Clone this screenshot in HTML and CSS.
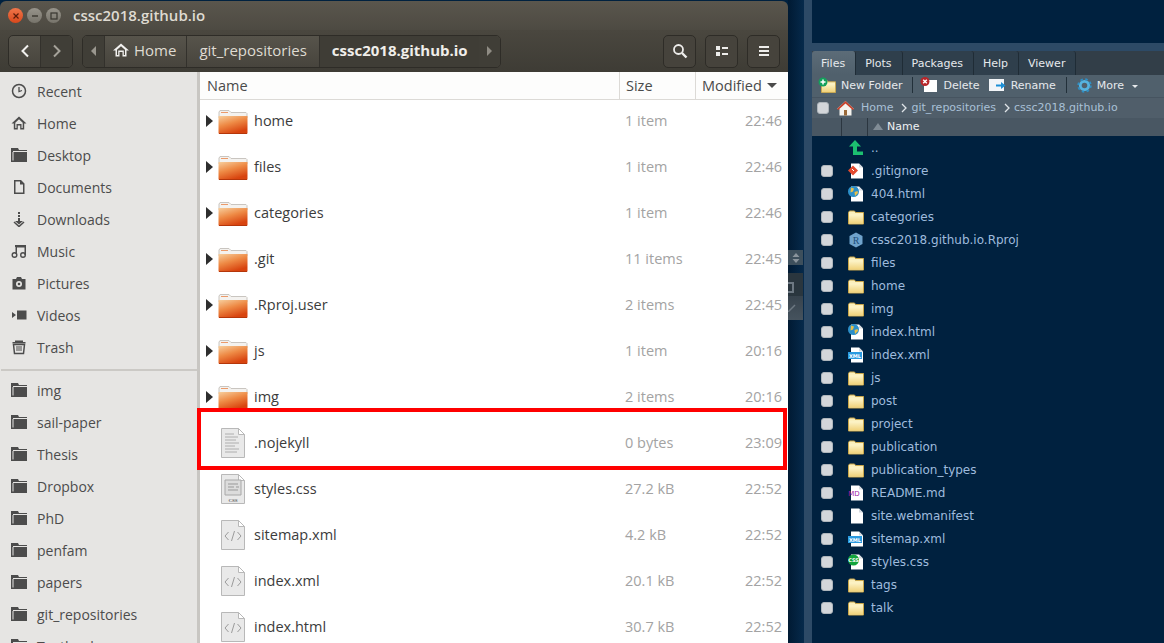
FILE: index.html
```html
<!DOCTYPE html>
<html lang="en">
<head>
  <meta charset="UTF-8" />
  <meta name="viewport" content="width=device-width, initial-scale=1" />
  <title>cssc2018.github.io</title>
  <link rel="stylesheet" href="styles.css">
</head>
<body>

<svg class="defs" width="0" height="0">
  <defs>
    <linearGradient id="orange" x1="0" y1="0" x2="0.5" y2="1">
      <stop offset="0" stop-color="#f7cf9e"/>
      <stop offset="0.5" stop-color="#ee8a45"/>
      <stop offset="1" stop-color="#d8440f"/>
    </linearGradient>
    <linearGradient id="yellow" x1="0" y1="0" x2="0" y2="1">
      <stop offset="0" stop-color="#fdf5cb"/>
      <stop offset="1" stop-color="#f0d27a"/>
    </linearGradient>
    <symbol id="side-folder" viewBox="0 0 16 16">
      <path d="M0 1h7l1 2h8v12H0z M1.500 5v8.500h1V5z" fill="#4c4c4c" fill-rule="evenodd"/>
      <path d="M2 4.500h14" stroke="#e6e5e3"/>
    </symbol>
    <symbol id="orange-folder" viewBox="0 0 30 24">
      <path d="M1 2l1-1.500h9l2 2h15l1 1V8H1z" fill="#f4f2ef" stroke="#c9c5c0"/>
      <path d="M3 2.500h7" stroke="#eb9a6a"/>
      <path d="M.5 6h29v17.500h-29z" fill="url(#orange)"/>
      <path d="M1 23.500h28" stroke="#b5360a"/>
    </symbol>
    <symbol id="text-file" viewBox="0 0 24 30">
      <path d="M.5.5h17l6 6v23H.5z" fill="#e9e9e9" stroke="#b8b8b8"/>
      <path d="M17.500.5v6h6z" fill="#fff" stroke="#b8b8b8"/>
    </symbol>
    <symbol id="code-file" viewBox="0 0 24 30">
      <use href="#text-file" width="24" height="30"/>
      <path d="M7.500 12L4 16l3.500 4M16.500 12l3.500 4-3.500 4M13.500 11l-3 10" fill="none" stroke="#9b9b9b"/>
    </symbol>
    <symbol id="yellow-folder" viewBox="0 0 16 15">
      <path d="M.5 3l1-1.500h5l1 1.500h8v11.500H.5z" fill="#fbf0bd" stroke="#c9a64a"/>
      <path d="M1 5h14v9H1z" fill="url(#yellow)"/>
    </symbol>
    <symbol id="page" viewBox="0 0 16 16">
      <path d="M3 .5h8l4 4v11H3z" fill="#fff"/>
      <path d="M11 .5v4h4z" fill="#d5dbe1"/>
    </symbol>
  </defs>
</svg>

<div class="desktop">

  <section class="nautilus">
    <header class="titlebar">
      <div class="win-btn close">
        <svg width="8" height="8" viewBox="0 0 8 8"><path d="M1.500 1.500l5 5M6.500 1.500l-5 5" stroke="#5a1c0a" stroke-width="1.200"/></svg>
      </div>
      <div class="win-btn">
        <svg width="8" height="8" viewBox="0 0 8 8"><path d="M1 4h6" stroke="#38362f" stroke-width="1.400"/></svg>
      </div>
      <div class="win-btn">
        <svg width="8" height="8" viewBox="0 0 8 8"><rect x="1" y="1" width="6" height="6" fill="none" stroke="#38362f" stroke-width="1.200"/></svg>
      </div>
      <span class="win-title">cssc2018.github.io</span>
    </header>

    <div class="toolbar">
      <div class="btn-group nav-group">
        <div class="nav-btn">
          <svg width="10" height="14" viewBox="0 0 10 14"><path d="M8 1.500L2.500 7 8 12.500" fill="none" stroke="#f2f1ef" stroke-width="2"/></svg>
        </div>
        <div class="nav-btn disabled">
          <svg width="10" height="14" viewBox="0 0 10 14"><path d="M2 1.500L7.500 7 2 12.500" fill="none" stroke="#a5a29a" stroke-width="2"/></svg>
        </div>
      </div>
      <div class="btn-group crumbs">
        <div class="crumb-arrow"><svg width="6" height="10" viewBox="0 0 6 10"><path d="M5 0v10L0 5z" fill="#9a978f"/></svg></div>
        <div class="crumb crumb-home">
          <svg width="16" height="14" viewBox="0 0 16 14"><path d="M8 .5L0 7.500h2.500v6h4V9h3v4.500h4v-6H16z M4 6.800L8 3.200l4 3.600V12h-1.200V7.500H5.200V12H4z" fill="#f2f1ef" fill-rule="evenodd"/></svg>
          Home
        </div>
        <div class="crumb">git_repositories</div>
        <div class="crumb current">cssc2018.github.io</div>
        <div class="crumb-arrow"><svg width="6" height="10" viewBox="0 0 6 10"><path d="M1 0v10l5-5z" fill="#8f8c84"/></svg></div>
      </div>
      <div class="tool-spacer"></div>
      <div class="tool-btn">
        <svg width="16" height="16" viewBox="0 0 16 16"><circle cx="6.500" cy="6.500" r="4.500" fill="none" stroke="#eeedeb" stroke-width="1.800"/><path d="M10 10l4.500 4.500" stroke="#eeedeb" stroke-width="2.400"/></svg>
      </div>
      <div class="tool-btn">
        <svg width="14" height="12" viewBox="0 0 14 12"><path d="M1 1h4v4H1zM1 7h4v4H1zM7 2h6v2H7zM7 8h6v2H7z" fill="#eeedeb"/></svg>
      </div>
      <div class="tool-btn">
        <svg width="12" height="12" viewBox="0 0 12 12"><path d="M1 1h10v2H1zM1 5h10v2H1zM1 9h10v2H1z" fill="#eeedeb"/></svg>
      </div>
    </div>

    <div class="nautilus-body">
      <aside class="places">
        <ul class="place-list">
          <li><svg class="place-icon" viewBox="0 0 16 16"><circle cx="8" cy="8" r="6.500" fill="none" stroke="#4c4c4c" stroke-width="1.500"/><path d="M8 4v4.500l3-1" fill="none" stroke="#4c4c4c" stroke-width="1.300"/></svg>Recent</li>
          <li><svg class="place-icon" viewBox="0 0 16 16"><path d="M8 1.500L.5 8.500h2.300v6h4v-4h2.400v4h4v-6h2.300zM4.300 7.700L8 4.200l3.700 3.500v5.300h-1.200V9H5.500v4H4.300z" fill="#4c4c4c" fill-rule="evenodd"/></svg>Home</li>
          <li><svg class="place-icon"><use href="#side-folder"/></svg>Desktop</li>
          <li><svg class="place-icon" viewBox="0 0 16 16"><path d="M3 1h7l3.500 3.500V15H3z M4.500 2.500v11h7.500V5.500H9v-3z" fill="#4c4c4c" fill-rule="evenodd"/></svg>Documents</li>
          <li><svg class="place-icon" viewBox="0 0 16 16"><path d="M7 1h2v2H7zM7 4h2v2H7zM7 7h2v3h3L8 13.500 4 10h3z" fill="#4c4c4c"/><path d="M3 11l5 4.500 5-4.500" fill="none" stroke="#4c4c4c" stroke-width="1.500"/></svg>Downloads</li>
          <li><svg class="place-icon" viewBox="0 0 16 16"><path d="M4 2h11v2.500H6V11H4.500V4H4zM13.500 4H15v8h-1.500z" fill="#4c4c4c"/><circle cx="3.500" cy="12" r="2.300" fill="none" stroke="#4c4c4c" stroke-width="1.400"/><circle cx="12" cy="12" r="2.300" fill="none" stroke="#4c4c4c" stroke-width="1.400"/></svg>Music</li>
          <li><svg class="place-icon" viewBox="0 0 16 16"><path d="M1.500 4H5l1-2h4l1 2h3.500v10.500h-13z" fill="#4c4c4c"/><circle cx="8" cy="9" r="3" fill="#e6e5e3"/><circle cx="8" cy="9" r="1.300" fill="#4c4c4c"/></svg>Pictures</li>
          <li><svg class="place-icon" viewBox="0 0 16 16"><path d="M6 3.500h9.500v9H6zM1 5l4 3-4 3z" fill="#4c4c4c"/></svg>Videos</li>
          <li><svg class="place-icon" viewBox="0 0 16 16"><path d="M4 1.500h8v2H4z M1.500 3h13v1.500h-13z" fill="#4c4c4c"/><path d="M2.500 5.500h11l-1 9h-9z" fill="none" stroke="#4c4c4c" stroke-width="1.500"/><path d="M6 7v5M8 7v5M10 7v5" stroke="#4c4c4c"/></svg>Trash</li>
        </ul>
        <ul class="place-list bookmarks">
          <li><svg class="place-icon"><use href="#side-folder"/></svg>img</li>
          <li><svg class="place-icon"><use href="#side-folder"/></svg>sail-paper</li>
          <li><svg class="place-icon"><use href="#side-folder"/></svg>Thesis</li>
          <li><svg class="place-icon"><use href="#side-folder"/></svg>Dropbox</li>
          <li><svg class="place-icon"><use href="#side-folder"/></svg>PhD</li>
          <li><svg class="place-icon"><use href="#side-folder"/></svg>penfam</li>
          <li><svg class="place-icon"><use href="#side-folder"/></svg>papers</li>
          <li><svg class="place-icon"><use href="#side-folder"/></svg>git_repositories</li>
          <li><svg class="place-icon"><use href="#side-folder"/></svg>Textbook</li>
        </ul>
      </aside>

      <main class="file-view">
        <div class="col-head">
          <div class="col col-name">Name</div>
          <div class="col col-size">Size</div>
          <div class="col col-date">Modified <span class="sort-caret"></span></div>
        </div>

        <div class="file-row">
          <span class="expander"></span><svg class="folder-icon"><use href="#orange-folder"/></svg>
          <span class="file-name">home</span><span class="file-size">1 item</span><span class="file-date">22:46</span>
        </div>
        <div class="file-row">
          <span class="expander"></span><svg class="folder-icon"><use href="#orange-folder"/></svg>
          <span class="file-name">files</span><span class="file-size">1 item</span><span class="file-date">22:46</span>
        </div>
        <div class="file-row">
          <span class="expander"></span><svg class="folder-icon"><use href="#orange-folder"/></svg>
          <span class="file-name">categories</span><span class="file-size">1 item</span><span class="file-date">22:46</span>
        </div>
        <div class="file-row">
          <span class="expander"></span><svg class="folder-icon"><use href="#orange-folder"/></svg>
          <span class="file-name">.git</span><span class="file-size">11 items</span><span class="file-date">22:45</span>
        </div>
        <div class="file-row">
          <span class="expander"></span><svg class="folder-icon"><use href="#orange-folder"/></svg>
          <span class="file-name">.Rproj.user</span><span class="file-size">2 items</span><span class="file-date">22:45</span>
        </div>
        <div class="file-row">
          <span class="expander"></span><svg class="folder-icon"><use href="#orange-folder"/></svg>
          <span class="file-name">js</span><span class="file-size">1 item</span><span class="file-date">20:16</span>
        </div>
        <div class="file-row">
          <span class="expander"></span><svg class="folder-icon"><use href="#orange-folder"/></svg>
          <span class="file-name">img</span><span class="file-size">2 items</span><span class="file-date">20:16</span>
        </div>
        <div class="file-row">
          <span class="expander none"></span>
          <svg class="doc-icon" viewBox="0 0 24 30">
            <use href="#text-file" width="24" height="30"/>
            <path d="M4 6h9M4 9h13M4 12h11M4 15h14M4 18h10M4 21h14M4 24h12" stroke="#aeaeae"/>
          </svg>
          <span class="file-name">.nojekyll</span><span class="file-size">0 bytes</span><span class="file-date">23:09</span>
        </div>
        <div class="file-row">
          <span class="expander none"></span>
          <svg class="doc-icon" viewBox="0 0 24 30">
            <use href="#text-file" width="24" height="30"/>
            <path d="M4 6h16v15H4z" fill="#dcdcdc" stroke="#a8a8a8"/>
            <path d="M7 10h10M7 13h6M15 13h3M7 16h10" stroke="#999"/>
            <text x="12" y="27.500" class="css-tag">CSS</text>
          </svg>
          <span class="file-name">styles.css</span><span class="file-size">27.2 kB</span><span class="file-date">22:52</span>
        </div>
        <div class="file-row">
          <span class="expander none"></span>
          <svg class="doc-icon"><use href="#code-file"/></svg>
          <span class="file-name">sitemap.xml</span><span class="file-size">4.2 kB</span><span class="file-date">22:52</span>
        </div>
        <div class="file-row">
          <span class="expander none"></span>
          <svg class="doc-icon"><use href="#code-file"/></svg>
          <span class="file-name">index.xml</span><span class="file-size">20.1 kB</span><span class="file-date">22:52</span>
        </div>
        <div class="file-row">
          <span class="expander none"></span>
          <svg class="doc-icon"><use href="#code-file"/></svg>
          <span class="file-name">index.html</span><span class="file-size">30.7 kB</span><span class="file-date">22:52</span>
        </div>
      </main>
    </div>

    <div class="highlight-box"></div>
  </section>

  <div class="splitter">
    <div class="split-widget">
      <svg width="8" height="12" viewBox="0 0 8 12"><path d="M4 1l3.500 4h-7zM4 11L.5 7h7z" fill="#8a949c"/></svg>
    </div>
    <div class="split-panel">
      <span class="split-top"><span class="split-square"></span></span>
      <span class="split-bottom">
        <svg width="8" height="8" viewBox="0 0 8 8"><path d="M0 8L7 1" stroke="#6d7882" stroke-width="1.500"/></svg>
      </span>
    </div>
  </div>

  <section class="rstudio">
    <div class="r-tabs">
      <div class="r-tab active">Files</div>
      <div class="r-tab">Plots</div>
      <div class="r-tab">Packages</div>
      <div class="r-tab">Help</div>
      <div class="r-tab">Viewer</div>
    </div>

    <div class="r-toolbar">
      <span class="r-action">
        <svg width="18" height="16" viewBox="0 0 18 16"><use href="#yellow-folder" x="3" y="2" width="15" height="14"/><circle cx="5" cy="5" r="4.500" fill="#14a05c"/><path d="M5 2.500v5M2.500 5h5" stroke="#fff" stroke-width="1.500"/></svg>
        New Folder
      </span>
      <span class="r-sep"></span>
      <span class="r-action">
        <svg width="18" height="16" viewBox="0 0 18 16"><path d="M4 3h13v12H4z" fill="#fff"/><circle cx="5" cy="4.500" r="4.500" fill="#b8262a"/><path d="M3.200 2.700l3.600 3.600M6.800 2.700L3.200 6.300" stroke="#fff" stroke-width="1.400"/></svg>
        Delete
      </span>
      <span class="r-action rename">
        <svg width="17" height="14" viewBox="0 0 17 14"><path d="M0 1h15v12H0z" fill="#f2f5f8"/><path d="M7 6.500h5V4l4.500 3.500L12 11V8.500H7z" fill="#1c8fd6"/></svg>
        Rename
      </span>
      <span class="r-sep wide"></span>
      <span class="r-action">
        <svg width="15" height="15" viewBox="0 0 15 15"><circle cx="7.500" cy="7.500" r="4.200" fill="none" stroke="#56b4e0" stroke-width="2.800"/><circle cx="7.500" cy="7.500" r="6.300" fill="none" stroke="#2f8fc4" stroke-width="1.800" stroke-dasharray="2.500 2.450"/></svg>
        More
        <span class="r-caret"></span>
      </span>
    </div>

    <div class="r-path">
      <span class="r-check"></span>
      <svg class="r-home" width="17" height="16" viewBox="0 0 17 16"><path d="M8.500 1L0 9h2.500v6.500h12V9H17z" fill="#f5f3ee"/><path d="M8.500 1L0 9l1.200 1L8.500 3.500 15.800 10 17 9z" fill="#c8402a"/><path d="M7 10h3v5.500H7z" fill="#9a6a3a"/></svg>
      <span class="r-link">Home</span>
      <svg class="r-gt" width="6" height="10" viewBox="0 0 6 10"><path d="M1 1l4 4-4 4" fill="none" stroke="#dfe4e8" stroke-width="1.300"/></svg>
      <span class="r-link">git_repositories</span>
      <svg class="r-gt" width="6" height="10" viewBox="0 0 6 10"><path d="M1 1l4 4-4 4" fill="none" stroke="#dfe4e8" stroke-width="1.300"/></svg>
      <span class="r-link">cssc2018.github.io</span>
    </div>

    <div class="r-head">
      <span class="r-head-a"></span>
      <span class="r-head-b"></span>
      <span class="r-head-name"><span class="r-sort"></span>Name</span>
    </div>

    <div class="r-row">
      <span class="r-check hidden"></span>
      <svg class="r-icon" viewBox="0 0 16 16"><path d="M7 0L1 6.500h4V15h10v-3.500H9V6.500h4z" fill="#1cc070"/></svg>
      <span class="r-name">..</span>
    </div>
    <div class="r-row">
      <span class="r-check"></span>
      <svg class="r-icon" viewBox="0 0 16 16"><use href="#page" width="16" height="16"/><path d="M5 2.500L10 7.500 5 12.500 0 7.500z" fill="#e2492f"/><path d="M4 6l2 2" stroke="#fff"/></svg>
      <span class="r-name">.gitignore</span>
    </div>
    <div class="r-row">
      <span class="r-check"></span>
      <svg class="r-icon" viewBox="0 0 16 16"><use href="#page" width="16" height="16"/><circle cx="5.500" cy="5.500" r="5.500" fill="#2b8fc9"/><path d="M3 1.500l3 1-1 3-2.500 1zM6.500 6l3-1 .5 2-3 3z" fill="#e8c04a"/></svg>
      <span class="r-name">404.html</span>
    </div>
    <div class="r-row">
      <span class="r-check"></span>
      <svg class="r-icon"><use href="#yellow-folder"/></svg>
      <span class="r-name">categories</span>
    </div>
    <div class="r-row">
      <span class="r-check"></span>
      <svg class="r-icon" viewBox="0 0 16 16"><path d="M8 .5l6.500 3.500v8L8 15.500 1.500 12V4z" fill="#6fa3cc"/><text x="8" y="11.500" class="tag-r">R</text></svg>
      <span class="r-name">cssc2018.github.io.Rproj</span>
    </div>
    <div class="r-row">
      <span class="r-check"></span>
      <svg class="r-icon"><use href="#yellow-folder"/></svg>
      <span class="r-name">files</span>
    </div>
    <div class="r-row">
      <span class="r-check"></span>
      <svg class="r-icon"><use href="#yellow-folder"/></svg>
      <span class="r-name">home</span>
    </div>
    <div class="r-row">
      <span class="r-check"></span>
      <svg class="r-icon"><use href="#yellow-folder"/></svg>
      <span class="r-name">img</span>
    </div>
    <div class="r-row">
      <span class="r-check"></span>
      <svg class="r-icon" viewBox="0 0 16 16"><use href="#page" width="16" height="16"/><circle cx="5.500" cy="5.500" r="5.500" fill="#2b8fc9"/><path d="M3 1.500l3 1-1 3-2.500 1zM6.500 6l3-1 .5 2-3 3z" fill="#e8c04a"/></svg>
      <span class="r-name">index.html</span>
    </div>
    <div class="r-row">
      <span class="r-check"></span>
      <svg class="r-icon" viewBox="0 0 16 16"><use href="#page" width="16" height="16"/><rect x="0" y="5" width="14" height="7" fill="#2a9ae0"/><text x="7" y="11" class="tag-small">XML</text></svg>
      <span class="r-name">index.xml</span>
    </div>
    <div class="r-row">
      <span class="r-check"></span>
      <svg class="r-icon"><use href="#yellow-folder"/></svg>
      <span class="r-name">js</span>
    </div>
    <div class="r-row">
      <span class="r-check"></span>
      <svg class="r-icon"><use href="#yellow-folder"/></svg>
      <span class="r-name">post</span>
    </div>
    <div class="r-row">
      <span class="r-check"></span>
      <svg class="r-icon"><use href="#yellow-folder"/></svg>
      <span class="r-name">project</span>
    </div>
    <div class="r-row">
      <span class="r-check"></span>
      <svg class="r-icon"><use href="#yellow-folder"/></svg>
      <span class="r-name">publication</span>
    </div>
    <div class="r-row">
      <span class="r-check"></span>
      <svg class="r-icon"><use href="#yellow-folder"/></svg>
      <span class="r-name">publication_types</span>
    </div>
    <div class="r-row">
      <span class="r-check"></span>
      <svg class="r-icon" viewBox="0 0 16 16"><use href="#page" width="16" height="16"/><text x="6" y="11" class="tag-md">MD</text></svg>
      <span class="r-name">README.md</span>
    </div>
    <div class="r-row">
      <span class="r-check"></span>
      <svg class="r-icon" viewBox="0 0 16 16"><use href="#page" width="16" height="16"/></svg>
      <span class="r-name">site.webmanifest</span>
    </div>
    <div class="r-row">
      <span class="r-check"></span>
      <svg class="r-icon" viewBox="0 0 16 16"><use href="#page" width="16" height="16"/><rect x="0" y="5" width="14" height="7" fill="#2a9ae0"/><text x="7" y="11" class="tag-small">XML</text></svg>
      <span class="r-name">sitemap.xml</span>
    </div>
    <div class="r-row">
      <span class="r-check"></span>
      <svg class="r-icon" viewBox="0 0 16 16"><use href="#page" width="16" height="16"/><circle cx="5.500" cy="6" r="5.500" fill="#13a53c"/><text x="5.500" y="8" class="tag-small">CSS</text></svg>
      <span class="r-name">styles.css</span>
    </div>
    <div class="r-row">
      <span class="r-check"></span>
      <svg class="r-icon"><use href="#yellow-folder"/></svg>
      <span class="r-name">tags</span>
    </div>
    <div class="r-row">
      <span class="r-check"></span>
      <svg class="r-icon"><use href="#yellow-folder"/></svg>
      <span class="r-name">talk</span>
    </div>
  </section>

</div>

</body>
</html>
```

FILE: styles.css
```css
* {
  box-sizing: border-box;
}
html, body {
  margin: 0;
  height: 100%;
}
body {
  background-color: #00213f;
  overflow: hidden;
}
.defs {
  position: absolute;
}
.desktop {
  display: flex;
  height: 643px;
  overflow: hidden;
}

/* file manager window */
.nautilus {
  position: relative;
  width: 788px;
  flex: none;
  margin-top: 1px;
  font-family: "Open Sans", "Noto Sans", sans-serif;
  font-size: 14px;
}
.titlebar {
  display: flex;
  align-items: center;
  height: 29px;
  padding-left: 8px;
  gap: 4px;
  background: linear-gradient(#5a564d, #4d4a42);
  border-radius: 6px 6px 0 0;
}
.win-btn {
  display: flex;
  align-items: center;
  justify-content: center;
  width: 15px;
  height: 15px;
  border-radius: 50%;
  background: linear-gradient(#97948b, #77746b);
}
.win-btn.close {
  background: linear-gradient(#f0764a, #d8481c);
}
.win-title {
  margin: -2px 0 0 8px;
  font-size: 15px;
  font-weight: 600;
  color: #dfdbd2;
}
.toolbar {
  display: flex;
  align-items: center;
  height: 42px;
  padding: 0 8px;
  background: linear-gradient(#4a473f, #3e3c35);
  color: #dfdbd2;
  font-size: 15px;
}
.btn-group {
  display: flex;
  height: 33px;
  border: 1px solid #2e2c27;
  border-radius: 5px;
  overflow: hidden;
  background: linear-gradient(#57544b, #47443d);
}
.nav-group {
  width: 65px;
  margin-right: 9px;
}
.nav-btn {
  flex: 1;
  display: flex;
  align-items: center;
  justify-content: center;
}
.nav-btn.disabled {
  background: #403e37;
  border-left: 1px solid #33312c;
}
.crumb-arrow {
  display: flex;
  align-items: center;
  justify-content: center;
  width: 21px;
  background: #403e37;
}
.crumb {
  display: flex;
  align-items: center;
  padding: 0 12px 2px;
  border-left: 1px solid #33312c;
  white-space: nowrap;
}
.crumb-home {
  gap: 5px;
  padding: 0 10px 2px 8px;
}
.crumb.current {
  padding-right: 11px;
  font-weight: 700;
  color: #f0eeea;
  background: #3f3d36;
}
.tool-spacer {
  flex: 1;
}
.tool-btn {
  display: flex;
  align-items: center;
  justify-content: center;
  width: 33px;
  height: 33px;
  margin-left: 9px;
  border: 1px solid #2e2c27;
  border-radius: 5px;
  background: #46433c;
}
.nautilus-body {
  display: flex;
  height: 571px;
  overflow: hidden;
  background: #fff;
}
.places {
  width: 200px;
  flex: none;
  padding-left: 1px;
  background: #e6e5e3;
  border-right: 3px solid #c8c6c2;
  color: #4c4c4c;
}
.place-list {
  list-style: none;
  margin: 0;
  padding: 3px 0 0;
}
.place-list li {
  display: flex;
  align-items: center;
  height: 32px;
  padding-left: 10px;
  white-space: nowrap;
}
.place-list.bookmarks {
  border-top: 2px solid #cbc9c5;
  margin-top: 6px;
  padding-top: 3px;
}
.place-icon {
  width: 16px;
  height: 16px;
  margin-right: 10px;
  flex: none;
}
.file-view {
  flex: 1;
  min-width: 0;
  color: #3c3c3c;
  font-size: 14.5px;
}
.col-head {
  display: flex;
  height: 28px;
  background: #fdfdfc;
  border-bottom: 1px solid #dcdad6;
  color: #4a4a4a;
}
.col {
  display: flex;
  align-items: center;
  padding-left: 6px;
}
.col-name {
  flex: 1;
  padding-left: 7px;
}
.col-size {
  width: 76px;
  border-left: 1px solid #dcdad6;
}
.col-date {
  width: 93px;
  border-left: 1px solid #dcdad6;
  gap: 2px;
}
.sort-caret {
  width: 0;
  height: 0;
  margin-left: 3px;
  border-left: 5px solid transparent;
  border-right: 5px solid transparent;
  border-top: 5px solid #4a4a4a;
}
.file-row {
  display: flex;
  align-items: center;
  height: 46px;
}
.expander {
  width: 0;
  height: 0;
  flex: none;
  margin: -4px 0 0 6px;
  border-top: 6px solid transparent;
  border-bottom: 6px solid transparent;
  border-left: 7px solid #2e2e2e;
}
.expander.none {
  border-left-color: transparent;
}
.folder-icon {
  width: 30px;
  height: 24px;
  margin: -2px 0 0 5px;
  flex: none;
}
.doc-icon {
  width: 24px;
  height: 30px;
  margin: -5px 3px 0 8px;
  flex: none;
}
.css-tag {
  font-family: "Liberation Serif", serif;
  font-size: 5px;
  font-weight: 700;
  text-anchor: middle;
  fill: #666;
}
.file-name {
  flex: 1;
  margin: -6px 0 0 6px;
}
.file-size {
  width: 100px;
  margin-top: -6px;
  color: #a3a3a3;
}
.file-date {
  width: 63px;
  padding-right: 6px;
  margin-top: -6px;
  text-align: right;
  color: #a3a3a3;
}
.highlight-box {
  position: absolute;
  left: 197px;
  top: 407px;
  width: 590px;
  height: 62px;
  border: 4px solid #ff0000;
}

/* strip between the two windows */
.splitter {
  width: 16px;
  flex: none;
  padding-top: 250px;
  background: linear-gradient(90deg, #001a33, #062a4b);
}
.split-widget {
  display: flex;
  align-items: center;
  justify-content: center;
  width: 15px;
  height: 15px;
  background: #3d4f5c;
}
.split-panel {
  display: flex;
  flex-direction: column;
  width: 15px;
  margin-top: 8px;
}
.split-top {
  display: flex;
  align-items: flex-end;
  height: 23px;
  padding-bottom: 3px;
  background: #2a363e;
}
.split-square {
  width: 6px;
  height: 11px;
  border: 2px solid #6d7882;
  border-left: 0;
}
.split-bottom {
  display: flex;
  align-items: center;
  height: 24px;
  background: linear-gradient(#37434d, #46535e);
}

/* rstudio files pane */
.rstudio {
  flex: 1;
  min-width: 0;
  padding-top: 43px;
  font-family: "DejaVu Sans", sans-serif;
  font-size: 12px;
  border-left: 8px solid #2d4a66;
  background: #00213f;
  color: #9fbbdd;
}
.r-tabs {
  display: flex;
  height: 32px;
  border-top: 8px solid #2d4a66;
  background: #323e48;
  color: #e6e9ec;
  font-size: 11px;
}
.r-tab {
  display: flex;
  align-items: center;
  padding: 0 10px 0 9px;
  background: #2f3f4c;
  border-right: 1px solid #1f2c36;
  border-radius: 3px 3px 0 0;
}
.r-tab.active {
  background: linear-gradient(#5c6c78, #50606c);
}
.r-toolbar {
  display: flex;
  align-items: center;
  height: 22px;
  padding: 0 0 2px 6px;
  background: #50606c;
  font-size: 11px;
  color: #e6e9ec;
}
.r-action {
  display: flex;
  align-items: center;
  gap: 5px;
  white-space: nowrap;
}
.r-action.rename {
  margin-left: 9px;
}
.r-sep {
  width: 1px;
  height: 16px;
  margin: 0 7px 0 10px;
  background: #22303a;
}
.r-sep.wide {
  margin-right: 10px;
}
.r-caret {
  width: 0;
  height: 0;
  margin: 2px 0 0 3px;
  border-left: 3px solid transparent;
  border-right: 3px solid transparent;
  border-top: 3px solid #e6e9ec;
}
.r-path {
  display: flex;
  align-items: center;
  height: 21px;
  padding: 0 0 1px 5px;
  background: #505e6a;
  border-top: 1px solid #465460;
  font-size: 11px;
  color: #a9c0d6;
}
.r-check {
  width: 12px;
  height: 12px;
  flex: none;
  border-radius: 3px;
  background: #d3d6da;
  border: 1px solid #aeb5bb;
}
.r-check.hidden {
  visibility: hidden;
}
.r-home {
  margin: 0 7px 0 8px;
  flex: none;
}
.r-gt {
  margin: 1px 4px 0 8px;
  flex: none;
}
.r-head {
  display: flex;
  height: 18px;
  background: #495763;
  color: #eef1f3;
  font-size: 11px;
}
.r-head-a {
  width: 30px;
  border-right: 1px solid #2b3640;
}
.r-head-b {
  width: 26px;
  border-right: 1px solid #2b3640;
}
.r-head-name {
  display: flex;
  align-items: center;
  padding: 0 0 1px 5px;
}
.r-sort {
  width: 0;
  height: 0;
  margin-right: 4px;
  border-left: 5px solid transparent;
  border-right: 5px solid transparent;
  border-bottom: 7px solid #808c96;
}
.r-row {
  display: flex;
  align-items: center;
  height: 23px;
  padding-left: 9px;
}
.r-icon {
  width: 16px;
  height: 16px;
  margin: 0 7px 0 15px;
  flex: none;
}
.r-name {
  white-space: nowrap;
}
.tag-small {
  font-family: "DejaVu Sans", sans-serif;
  font-size: 5px;
  font-weight: 700;
  text-anchor: middle;
  fill: #fff;
}
.tag-md {
  font-family: "DejaVu Sans", sans-serif;
  font-size: 7px;
  text-anchor: middle;
  fill: #a01fa8;
}
.tag-r {
  font-family: "Liberation Serif", serif;
  font-size: 10px;
  text-anchor: middle;
  fill: #1d4f7c;
}
```
